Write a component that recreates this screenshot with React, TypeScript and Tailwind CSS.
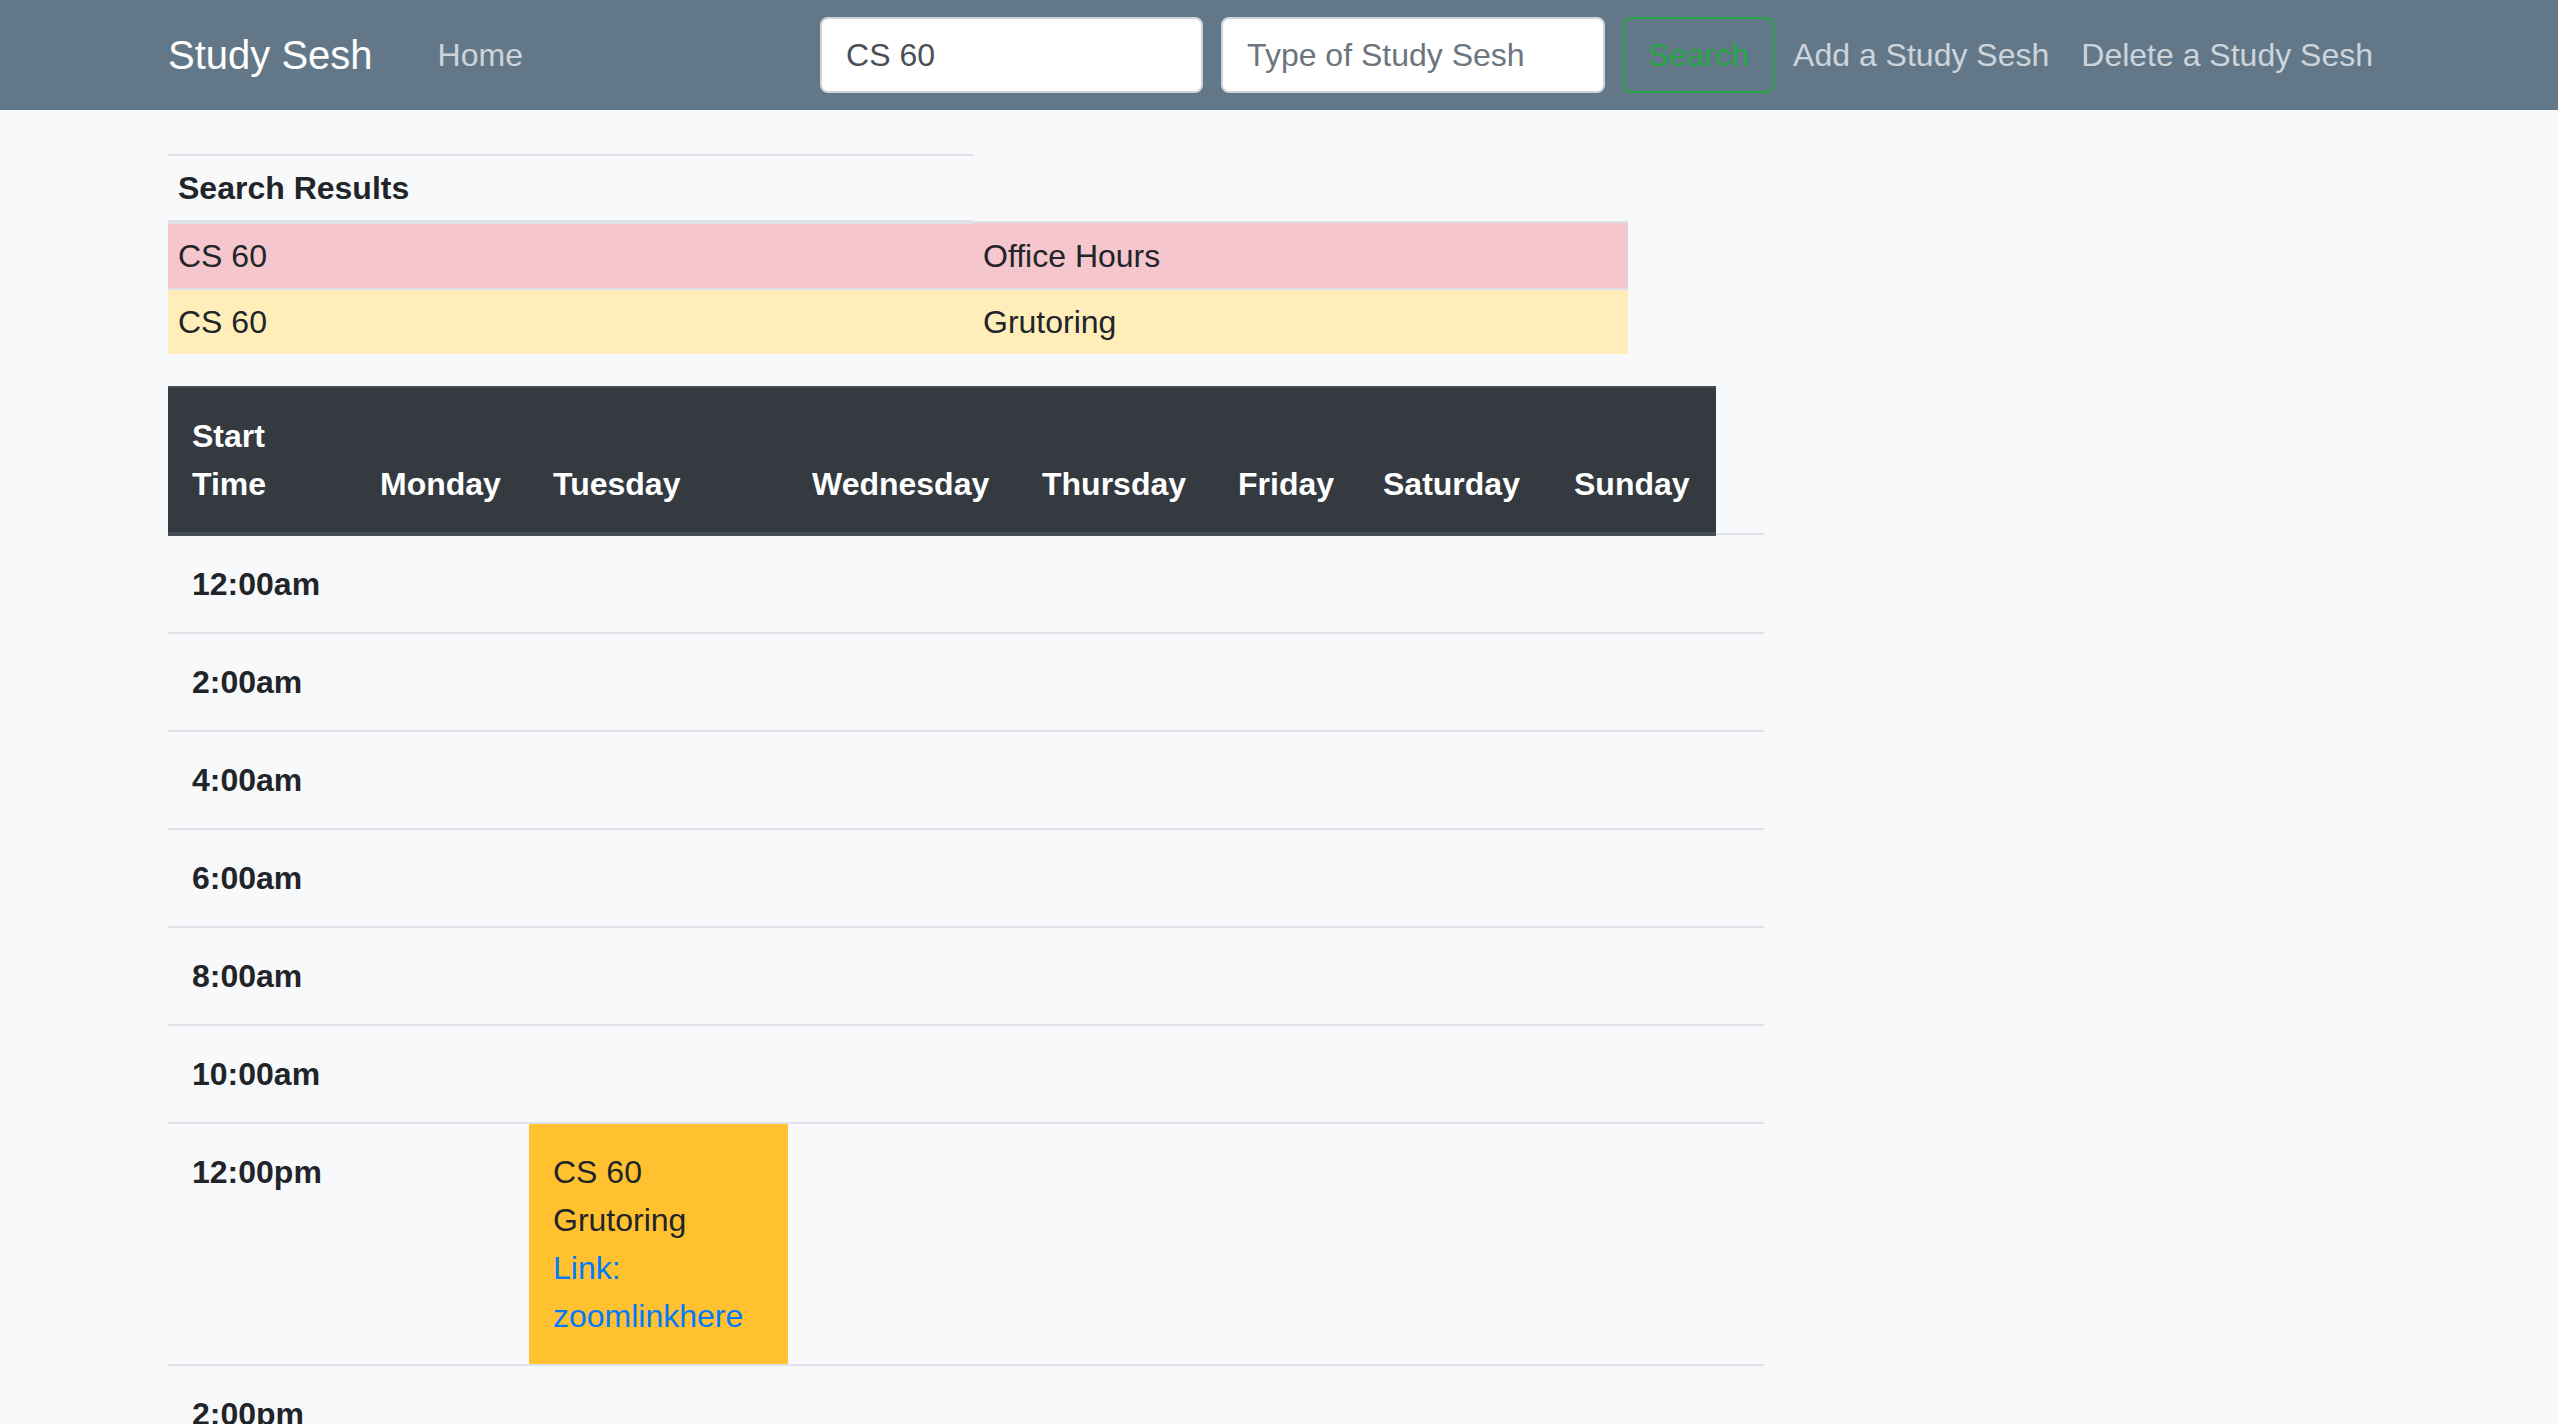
import React from "react";

const times = [
  "12:00am",
  "2:00am",
  "4:00am",
  "6:00am",
  "8:00am",
  "10:00am",
  "12:00pm",
  "2:00pm",
  "4:00pm",
  "6:00pm",
  "8:00pm",
  "10:00pm",
];

const days = ["Monday", "Tuesday", "Wednesday", "Thursday", "Friday", "Saturday", "Sunday"];

const results = [
  { course: "CS 60", kind: "Office Hours", rowClass: "bg-[#f5c6cb]" },
  { course: "CS 60", kind: "Grutoring", rowClass: "bg-[#ffeeba]" },
];

const cellClasses = "border-t-2 border-[#dee2e6] px-6 py-6 align-top";

const Navbar: React.FC = () => {
  return (
    <nav className="h-[110px] bg-[#627889]">
      <div className="mx-auto flex h-full max-w-[2280px] items-center pl-[29px] pr-[30px]">
        <a href="#" className="text-[40px] leading-[60px] text-white">
          Study Sesh
        </a>
        <a href="#" className="ml-[65px] text-[32px] leading-[48px] text-white/70">
          Home
        </a>
        <div className="ml-auto flex items-center">
          <form className="flex items-center gap-[18px]" onSubmit={(e) => e.preventDefault()}>
            <input
              type="text"
              defaultValue="CS 60"
              className="h-[76px] w-[383px] rounded-[8px] border-2 border-[#ced4da] bg-white px-6 text-[32px] text-[#495057] outline-none"
            />
            <input
              type="text"
              placeholder="Type of Study Sesh"
              className="h-[76px] w-[384px] rounded-[8px] border-2 border-[#ced4da] bg-white px-6 text-[32px] text-[#495057] outline-none placeholder:text-[#6c757d]"
            />
            <button
              type="submit"
              className="h-[76px] w-[151px] rounded-[8px] border-2 border-[#28a745] text-[32px] text-[#28a745]"
            >
              Search
            </button>
          </form>
          <a href="#" className="ml-[3px] px-4 text-[32px] leading-[48px] text-white/70">
            Add a Study Sesh
          </a>
          <a href="#" className="px-4 text-[32px] leading-[48px] text-white/70">
            Delete a Study Sesh
          </a>
        </div>
      </div>
    </nav>
  );
};

const SearchResults: React.FC = () => {
  return (
    <table className="mb-8 w-[1460px] table-fixed text-[32px] leading-[48px] text-[#212529]">
      <colgroup>
        <col className="w-[805px]" />
        <col className="w-[655px]" />
      </colgroup>
      <thead>
        <tr>
          <th className="border-t-2 border-b-4 border-[#dee2e6] px-[10px] py-2 text-left font-bold">
            Search Results
          </th>
        </tr>
      </thead>
      <tbody>
        {results.map((r, i) => (
          <tr key={i} className={r.rowClass}>
            <td className="border-t-2 border-[#dee2e6] px-[10px] py-2">{r.course}</td>
            <td className="border-t-2 border-[#dee2e6] px-[10px] py-2">{r.kind}</td>
          </tr>
        ))}
      </tbody>
    </table>
  );
};

const Schedule: React.FC = () => {
  return (
    <table className="w-[1596px] table-fixed text-[32px] leading-[48px] text-[#212529]">
      <colgroup>
        <col className="w-[188px]" />
        <col className="w-[173px]" />
        <col className="w-[259px]" />
        <col className="w-[230px]" />
        <col className="w-[196px]" />
        <col className="w-[145px]" />
        <col className="w-[191px]" />
        <col className="w-[166px]" />
        <col className="w-[48px]" />
      </colgroup>
      <thead>
        <tr>
          <th className="border-t-2 border-b-4 border-[#454d55] bg-[#343a40] px-6 py-6 text-left align-bottom font-bold text-white">
            Start Time
          </th>
          {days.map((d) => (
            <th
              key={d}
              className="whitespace-nowrap border-t-2 border-b-4 border-[#454d55] bg-[#343a40] px-6 py-6 text-left align-bottom font-bold text-white"
            >
              {d}
            </th>
          ))}
        </tr>
      </thead>
      <tbody>
        {times.map((t) => (
          <tr key={t}>
            <th className={cellClasses + " text-left font-bold"}>{t}</th>
            {days.map((d) =>
              t === "12:00pm" && d === "Tuesday" ? (
                <td key={d} className={cellClasses + " bg-[#ffc12f]"}>
                  <div>CS 60</div>
                  <div>Grutoring</div>
                  <a href="#" className="text-[#007bff]">
                    Link: zoomlinkhere
                  </a>
                </td>
              ) : (
                <td key={d} className={cellClasses}></td>
              )
            )}
            <td className={cellClasses}></td>
          </tr>
        ))}
      </tbody>
    </table>
  );
};

export default function App() {
  return (
    <div className="min-h-screen bg-[#f8f9fa] font-['Liberation_Sans',Arial,sans-serif]">
      <Navbar />
      <div className="mx-auto max-w-[2280px] pl-[29px] pr-[30px] pt-[44px]">
        <SearchResults />
        <Schedule />
      </div>
    </div>
  );
}
